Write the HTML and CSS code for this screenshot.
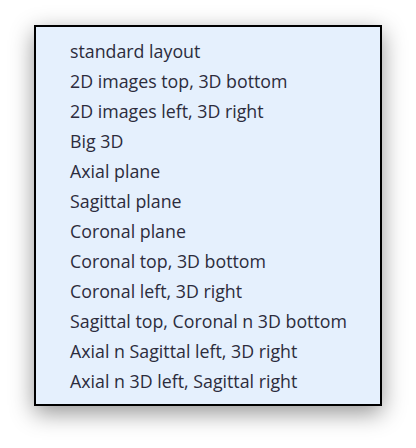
FILE: index.html
```html
<!DOCTYPE html>
<html>
<head>
<meta charset="utf-8">
<link rel="stylesheet" href="styles.css">
</head>
<body>
<ul class="menu">
  <li class="item">standard layout</li>
  <li class="item">2D images top, 3D bottom</li>
  <li class="item">2D images left, 3D right</li>
  <li class="item">Big 3D</li>
  <li class="item">Axial plane</li>
  <li class="item">Sagittal plane</li>
  <li class="item">Coronal plane</li>
  <li class="item">Coronal top, 3D bottom</li>
  <li class="item">Coronal left, 3D right</li>
  <li class="item">Sagittal top, Coronal n 3D bottom</li>
  <li class="item">Axial n Sagittal left, 3D right</li>
  <li class="item">Axial n 3D left, Sagittal right</li>
</ul>
</body>
</html>
```
FILE: styles.css
```css
html, body {
  margin: 0;
  padding: 0;
  background: #ffffff;
}
body {
  box-sizing: border-box;
  min-height: 448px;
  padding: 25px 0 0 34px;
  font-family: "Open Sans", "Noto Sans", sans-serif;
}
.menu {
  list-style: none;
  margin: 0;
  box-sizing: border-box;
  width: 348px;
  height: 381px;
  padding: 9px 0 0 34px;
  background: #e5f0fd;
  border: 2px solid #000;
  box-shadow: 0 7px 22px rgba(0, 0, 0, 0.42);
}
.item {
  height: 30px;
  line-height: 30px;
  font-size: 17.8px;
  color: #2c2c3c;
  white-space: nowrap;
}
```
